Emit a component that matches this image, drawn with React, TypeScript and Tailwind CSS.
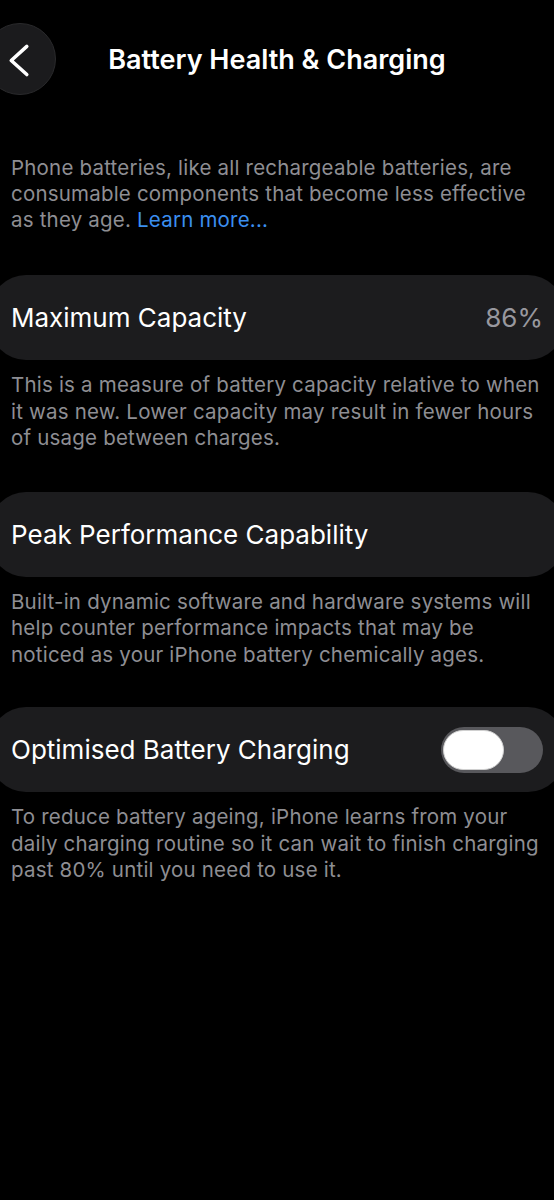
import React from "react";

const font = { fontFamily: "Inter, 'Noto Sans', sans-serif" };

function BackButton() {
  return (
    <button className="-ml-[16px] flex h-[72px] w-[72px] items-center justify-center rounded-full border border-[#2a2a2c] bg-[#1b1b1d]">
      <svg width="72" height="72" viewBox="0 0 72 72" fill="none">
        <path
          d="M43 23 L27 37.5 L43 52"
          stroke="#ffffff"
          strokeWidth="3.6"
          strokeLinecap="round"
          strokeLinejoin="round"
        />
      </svg>
    </button>
  );
}

function Row({ children }: { children: React.ReactNode }) {
  return (
    <div className="-mx-[21px] flex h-[85px] items-center justify-between rounded-[36px] bg-[#1c1c1e] pl-[21px] pr-[21px]">
      {children}
    </div>
  );
}

function Footnote({ children }: { children: React.ReactNode }) {
  return (
    <p className="mt-[12px] text-[20.5px] leading-[26.5px] tracking-[0.2px] text-[#8e8e93]">{children}</p>
  );
}

function Toggle() {
  return (
    <div className="flex h-[46px] w-[102px] items-center rounded-full bg-[#58585c] px-[2px]">
      <div className="h-[40px] w-[61px] rounded-full border border-[#d0d0d0] bg-white" />
    </div>
  );
}

export default function App() {
  return (
    <div className="min-h-[1200px] w-full overflow-hidden bg-black text-white" style={font}>
      <header className="grid grid-cols-[1fr_auto_1fr] items-center pt-[23px]">
        <div className="flex items-center">
          <BackButton />
        </div>
        <h1 className="pt-[3px] text-[27px] font-semibold">Battery Health &amp; Charging</h1>
        <div />
      </header>

      <main className="px-[11px]">
        <p className="mt-[60px] text-[20.5px] leading-[26px] tracking-[0.2px] text-[#8e8e93]">
          Phone batteries, like all rechargeable batteries, are consumable components that become less
          effective as they age. <span className="text-[#3b8ff0]">Learn more...</span>
        </p>

        <div className="mt-[42px]">
          <Row>
            <span className="text-[26px]">Maximum Capacity</span>
            <span className="text-[26px] text-[#98989e]">86%</span>
          </Row>
          <Footnote>
            This is a measure of battery capacity relative to when it was new. Lower capacity may result
            in fewer hours of usage between charges.
          </Footnote>
        </div>

        <div className="mt-[40px]">
          <Row>
            <span className="text-[26px]">Peak Performance Capability</span>
          </Row>
          <Footnote>
            Built-in dynamic software and hardware systems will help counter performance impacts that may
            be noticed as your iPhone battery chemically ages.
          </Footnote>
        </div>

        <div className="mt-[39px]">
          <Row>
            <span className="text-[26px]">Optimised Battery Charging</span>
            <Toggle />
          </Row>
          <Footnote>
            To reduce battery ageing, iPhone learns from your daily charging routine so it can wait to
            finish charging past 80% until you need to use it.
          </Footnote>
        </div>
      </main>
    </div>
  );
}
